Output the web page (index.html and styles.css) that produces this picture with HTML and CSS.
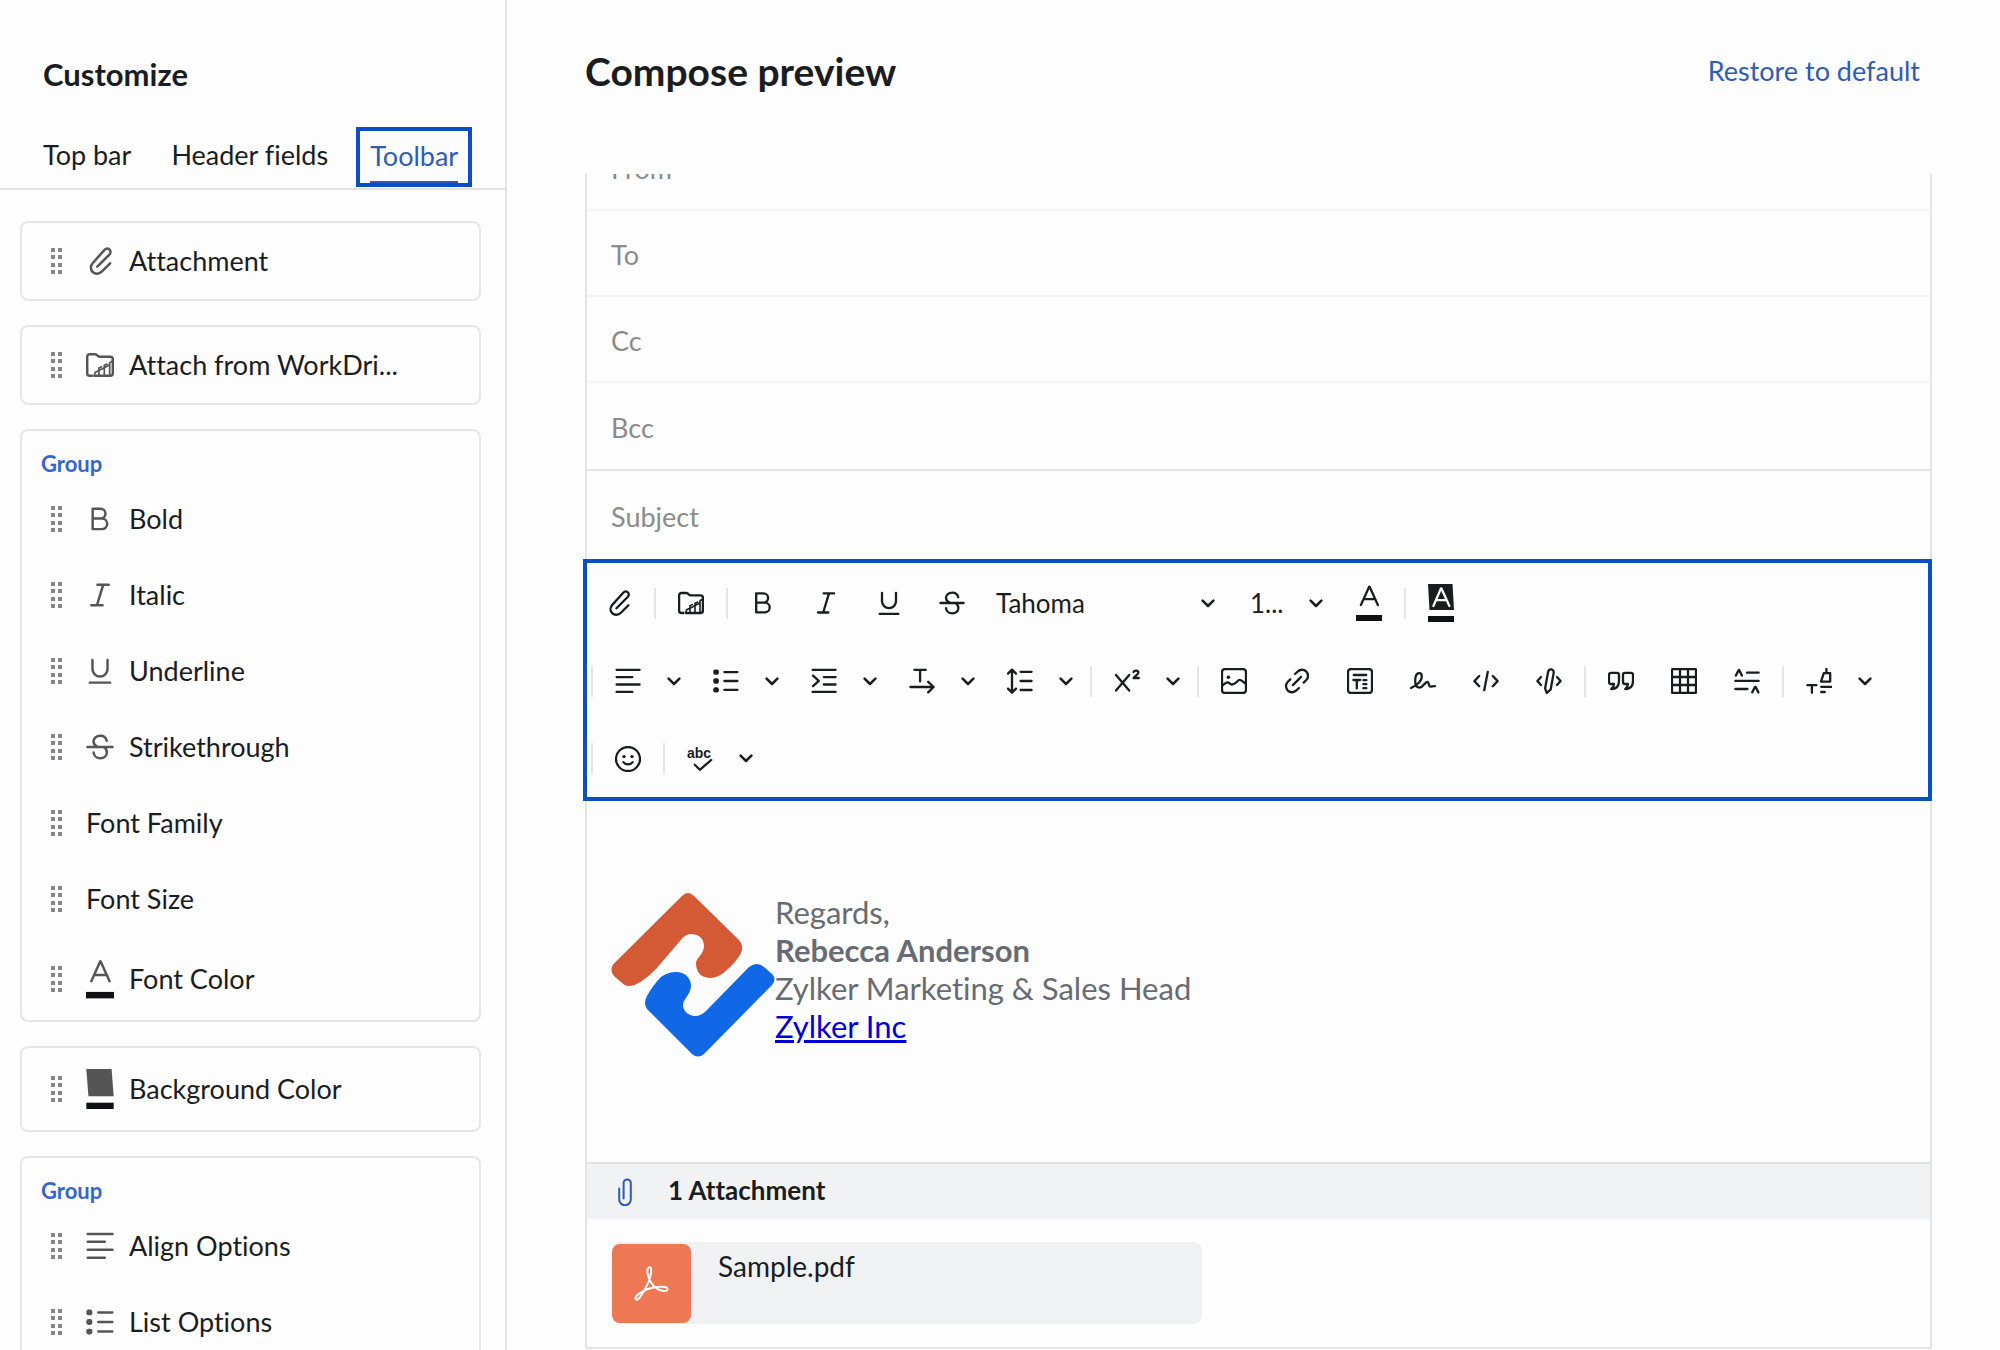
FILE: index.html
```html
<!DOCTYPE html>
<html lang="en">
<head>
<meta charset="utf-8">
<title>Compose preview</title>
<link rel="stylesheet" href="styles.css">
</head>
<body>
<svg class="sprite" aria-hidden="true">
  <symbol id="i-clip" viewBox="0 0 26 26"><path d="M22.4 15.2 14.9 22.7c-2.6 2.6-6.4 2.7-8.7.5s-2.2-5.9.3-8.6L17.2 2.7c1.3-1.4 3.3-1.5 4.6-.4s1.3 3.1.1 4.5L10.5 18.3"/></symbol>
  <symbol id="i-folder" viewBox="0 0 26 26"><path d="M5.5 23H3.4C2 23 1.1 22 1.1 20.6V5.500C1.1 4 2 3 3.4 3h5c1 0 1.600.4 2.200 1.200S12 5.400 13 5.400h9.400c1.500 0 2.500 1 2.500 2.400v12.800c0 1.400-1 2.400-2.400 2.400H8"/><path class="thin" d="M7.600 23l1-3.200 3.400-1.600V23M12 18.200v-2.400l2.400-1.200M12 18.200l5-2.600V23M17 15.600v-2.400l2.400-1M17 15.600l5-2.800V23M22 12.800v-2l2.600-1.600"/></symbol>
  <symbol id="i-bold" viewBox="0 0 26 26"><path d="M6.2 3.400h7.300a4.600 4.600 0 0 1 0 9.200H6.200zM6.200 12.600h8.600a4.900 4.900 0 0 1 0 9.800H6.200z"/></symbol>
  <symbol id="i-italic" viewBox="0 0 26 26"><path d="M10.7 3.4h10.4M5 22.5h10.4M16 3.4l-5.8 19.1"/></symbol>
  <symbol id="i-under" viewBox="0 0 26 26"><path d="M6 2.8v8.400a7 7 0 0 0 14 0V2.800M3.600 23.800h18.800"/></symbol>
  <symbol id="i-strike" viewBox="0 0 26 26"><path d="M1.4 13h23.2M19.2 7.2c-.6-2.8-2.9-4.6-5.8-4.6C9.6 2.6 7 5 7 7.8c0 2.2 1.4 3.8 3.6 4.8M7 18.2c.4 3 2.9 5.2 6.2 5.2 3.6 0 6.2-2.3 6.2-5.3 0-2.1-1-3.9-2.8-4.9"/></symbol>
  <symbol id="i-color" viewBox="0 0 26 36"><path d="M4.9 20 13.3 1.6h.2L21.9 20M7.600 14.200h11.600"/><path class="bar" d="M0 30h26v6H0z"/></symbol>
  <symbol id="i-bgfill" viewBox="0 0 26 38"><path class="solid" d="M0 0h24l2 26H2z"/><path class="bar" d="M0 32h26v6H0z"/></symbol>
  <symbol id="i-bg" viewBox="0 0 26 38"><path class="solid" d="M0 0h24.5l1.5 26H1.5z"/><path class="inv" d="M5.4 22 13 4.4h.4L21.400 22M8.200 16.200h10.600"/><path class="bar" d="M0 32h26v6H0z"/></symbol>
  <symbol id="i-align" viewBox="0 0 26 26"><path d="M1.6 1.8h23M1.6 9.1h15.8M1.6 16.5h23M1.6 23.9h15.8"/></symbol>
  <symbol id="i-list" viewBox="0 0 26 26"><path d="M11.4 4.1h13M11.4 13h13M11.4 21.9h13"/><rect class="solid" x=".3" y="1.4" width="5.6" height="5.4" rx="2"/><rect class="solid" x=".3" y="10.3" width="5.6" height="5.4" rx="2"/><rect class="solid" x=".3" y="19.2" width="5.6" height="5.4" rx="2"/></symbol>
  <symbol id="i-indent" viewBox="0 0 26 26"><path d="M1.6 1.8h23M12.8 9.1h11.8M12.8 16.5h11.8M1.6 23.9h23M2 7.6l5.8 5.2L2 18.2"/></symbol>
  <symbol id="i-dir" viewBox="0 0 26 26"><path d="M5.4 1.8h11.4M11.1 1.8v11.6M1.4 19h23M19.2 13.8l5.4 5.2-5.4 5.4"/></symbol>
  <symbol id="i-lineh" viewBox="0 0 26 26"><path d="M5 1.6v23M1 5.6l4-4 4 4M1 20.6l4 4 4-4M13.6 3.8h11M13.6 13h11M13.6 22h11"/></symbol>
  <symbol id="i-super" viewBox="0 0 26 26"><path d="M2 7l13.2 15.6M15.2 7 2 22.6"/><path d="M19.6 4c.5-2 4.8-2 4.8.6 0 2-3.6 3-4.8 5.4h5.2"/></symbol>
  <symbol id="i-image" viewBox="0 0 26 26"><rect x="1" y="1" width="24" height="24" rx="3"/><path d="M1.6 17.2c2-1.4 3.4-3 5-2.9 1.7.1 2.4 2.2 4.3 2.2 1.7 0 2.6-.6 4-1.8 1.5-1.2 2.2-2.9 3.9-2.9 1.6 0 3.8 2.4 5.8 3.8"/><circle class="solid" cx="7.4" cy="9.2" r="1.8"/></symbol>
  <symbol id="i-link" viewBox="0 0 26 26"><path d="M11 6l2.600-2.400a6 6 0 0 1 8.700 8.400l-2.600 2.600M15 20l-2.600 2.400a6 6 0 0 1-8.700-8.400l2.600-2.600M8.900 17.100l8.200-8.200"/></symbol>
  <symbol id="i-tbox" viewBox="0 0 26 26"><rect x="1" y="1" width="24" height="24" rx="3"/><path d="M6.8 7h12.4M6.4 12h6.8M9.8 12v8.4M16.4 12.2h3M16.4 16.2h3M16.4 20.2h3"/></symbol>
  <symbol id="i-sign" viewBox="0 0 26 26"><path d="M1 20c4.400-2.200 10.800-6 10.800-11.600 0-2-1-3.200-2.600-3.200-2.800 0-4 4-4 7.800 0 4.200 1.600 6.600 4.400 6.600 3.600 0 5-5.600 7.800-5.600 2 0 1 4.600 3.200 4.600 1.600 0 2.400-.8 4.200-.4"/></symbol>
  <symbol id="i-code" viewBox="0 0 26 26"><path d="M6.2 8l-4.8 5.1 4.8 5.1M14.8 3.8l-3.6 18.4M19.8 8l4.8 5.1-4.8 5.1"/></symbol>
  <symbol id="i-pencode" viewBox="0 0 26 26"><path d="M5 9l-3.6 4L5 17M21 9l3.6 4-3.6 4M10.8 25l-1.700-4.600 2.900-16c.4-2.200 1.800-3.300 3.500-3 1.700.3 2.500 1.800 2.100 4L14.700 21.400z"/></symbol>
  <symbol id="i-quote" viewBox="0 0 26 26"><path d="M3 4.800h6c1.300 0 2 .8 2 2v6.200c0 5-2.800 8-7.800 8.200 2-1.600 2.800-3 2.800-5.200H3c-1.300 0-2-.8-2-2V6.800c0-1.200.7-2 2-2z"/><path d="M17 4.800h6c1.300 0 2 .8 2 2v6.200c0 5-2.800 8-7.800 8.200 2-1.600 2.800-3 2.800-5.200h-3c-1.300 0-2-.8-2-2V6.800c0-1.200.7-2 2-2z"/></symbol>
  <symbol id="i-table" viewBox="0 0 26 26"><rect x="1" y="1" width="24" height="24" rx="1"/><path d="M9 1v24M17 1v24M1 9h24M1 17h24"/></symbol>
  <symbol id="i-space" viewBox="0 0 26 26"><path d="M1.800 7.600l2.900-5.600h.4L8 7.600M13 4.700h11.600M1.400 12.900h23.200M1.400 21h12M18.200 24.400l2.900-5.600h.4l2.900 5.600"/></symbol>
  <symbol id="i-format" viewBox="0 0 26 26"><path d="M1.400 17.200h9M5.900 17.200v7.600M20.400 1v4M17.800 5.200h6.400v8.400h-9.200zM15.200 18.800h10M15.200 24h3.600"/></symbol>
  <symbol id="i-smile" viewBox="0 0 26 26"><circle cx="13" cy="13" r="12"/><circle class="solid" cx="9" cy="10.600" r="1.700"/><circle class="solid" cx="17" cy="10.600" r="1.700"/><path d="M8.400 16.200c2.600 3 6.600 3 9.200 0"/></symbol>
  <symbol id="i-spell" viewBox="0 0 26 26"><text class="abc" x="0" y="12">abc</text><path d="M7.800 18.800l5 5L24.200 14"/></symbol>
  <symbol id="i-chev" viewBox="0 0 14 9"><path d="M1.600 1.600L7 7l5.400-5.400"/></symbol>
  <symbol id="i-grip" viewBox="0 0 12 26"><path class="solid" d="M0 0h4v4H0zM7 0h4v4H7zM0 7h4v4H0zM7 7h4v4H7zM0 15h4v4H0zM7 15h4v4H7zM0 22h4v4H0zM7 22h4v4H7z"/></symbol>
</svg>

<div class="app">
  <aside class="sidebar">
    <h2 class="sidebar-title">Customize</h2>
    <nav class="tabs">
      <button class="tab" type="button">Top bar</button>
      <button class="tab" type="button">Header fields</button>
      <button class="tab tab-active" type="button"><span class="tab-text">Toolbar</span></button>
    </nav>
    <div class="cards">
      <div class="card">
        <div class="item"><svg class="grip"><use href="#i-grip"/></svg><svg class="icon"><use href="#i-clip"/></svg><span class="name">Attachment</span></div>
      </div>
      <div class="card">
        <div class="item"><svg class="grip"><use href="#i-grip"/></svg><svg class="icon"><use href="#i-folder"/></svg><span class="name">Attach from WorkDri...</span></div>
      </div>
      <section class="card">
        <h3 class="group">Group</h3>
        <div class="item"><svg class="grip"><use href="#i-grip"/></svg><svg class="icon"><use href="#i-bold"/></svg><span class="name">Bold</span></div>
        <div class="item"><svg class="grip"><use href="#i-grip"/></svg><svg class="icon"><use href="#i-italic"/></svg><span class="name">Italic</span></div>
        <div class="item"><svg class="grip"><use href="#i-grip"/></svg><svg class="icon"><use href="#i-under"/></svg><span class="name">Underline</span></div>
        <div class="item"><svg class="grip"><use href="#i-grip"/></svg><svg class="icon"><use href="#i-strike"/></svg><span class="name">Strikethrough</span></div>
        <div class="item"><svg class="grip"><use href="#i-grip"/></svg><span class="name">Font Family</span></div>
        <div class="item"><svg class="grip"><use href="#i-grip"/></svg><span class="name">Font Size</span></div>
        <div class="item item-tall"><svg class="grip"><use href="#i-grip"/></svg><svg class="icon icon-tall"><use href="#i-color"/></svg><span class="name">Font Color</span></div>
      </section>
      <div class="card">
        <div class="item item-tall"><svg class="grip"><use href="#i-grip"/></svg><svg class="icon icon-tall"><use href="#i-bgfill"/></svg><span class="name">Background Color</span></div>
      </div>
      <section class="card">
        <h3 class="group">Group</h3>
        <div class="item"><svg class="grip"><use href="#i-grip"/></svg><svg class="icon"><use href="#i-align"/></svg><span class="name">Align Options</span></div>
        <div class="item"><svg class="grip"><use href="#i-grip"/></svg><svg class="icon"><use href="#i-list"/></svg><span class="name">List Options</span></div>
      </section>
    </div>
  </aside>

  <main class="main">
    <header class="head">
      <h1 class="title">Compose preview</h1>
      <a class="restore" href="#">Restore to default</a>
    </header>
    <div class="scroller">
      <div class="compose">
        <input class="field field-first" type="text" placeholder="From" aria-label="From">
        <input class="field" type="text" placeholder="To" aria-label="To">
        <input class="field" type="text" placeholder="Cc" aria-label="Cc">
        <input class="field field-last" type="text" placeholder="Bcc" aria-label="Bcc">
        <input class="field field-subject" type="text" placeholder="Subject" aria-label="Subject">

        <div class="toolbar" role="toolbar" aria-label="Formatting">
          <div class="row">
            <button class="tool" type="button" aria-label="Attachment"><svg><use href="#i-clip"/></svg></button>
            <span class="sep"></span>
            <button class="tool" type="button" aria-label="Attach from WorkDrive"><svg><use href="#i-folder"/></svg></button>
            <span class="sep"></span>
            <button class="tool" type="button" aria-label="Bold"><svg><use href="#i-bold"/></svg></button>
            <button class="tool" type="button" aria-label="Italic"><svg><use href="#i-italic"/></svg></button>
            <button class="tool" type="button" aria-label="Underline"><svg><use href="#i-under"/></svg></button>
            <button class="tool" type="button" aria-label="Strikethrough"><svg><use href="#i-strike"/></svg></button>
            <span class="picker picker-font"><select aria-label="Font family"><option>Tahoma</option></select><svg class="chev"><use href="#i-chev"/></svg></span>
            <span class="picker picker-size"><select aria-label="Font size"><option>1...</option></select><svg class="chev"><use href="#i-chev"/></svg></span>
            <button class="tool tool-tall" type="button" aria-label="Font color"><svg><use href="#i-color"/></svg></button>
            <span class="sep"></span>
            <button class="tool tool-tall" type="button" aria-label="Background color"><svg><use href="#i-bg"/></svg></button>
          </div>
          <div class="row">
            <span class="sep"></span>
            <button class="tool tool-drop" type="button" aria-label="Align"><svg><use href="#i-align"/></svg><svg class="chev"><use href="#i-chev"/></svg></button>
            <button class="tool tool-drop" type="button" aria-label="List"><svg><use href="#i-list"/></svg><svg class="chev"><use href="#i-chev"/></svg></button>
            <button class="tool tool-drop" type="button" aria-label="Indent"><svg><use href="#i-indent"/></svg><svg class="chev"><use href="#i-chev"/></svg></button>
            <button class="tool tool-drop" type="button" aria-label="Text direction"><svg><use href="#i-dir"/></svg><svg class="chev"><use href="#i-chev"/></svg></button>
            <button class="tool tool-drop" type="button" aria-label="Line height"><svg><use href="#i-lineh"/></svg><svg class="chev"><use href="#i-chev"/></svg></button>
            <span class="sep"></span>
            <button class="tool tool-drop" type="button" aria-label="Superscript"><svg><use href="#i-super"/></svg><svg class="chev"><use href="#i-chev"/></svg></button>
            <span class="sep"></span>
            <button class="tool" type="button" aria-label="Image"><svg><use href="#i-image"/></svg></button>
            <button class="tool" type="button" aria-label="Link"><svg><use href="#i-link"/></svg></button>
            <button class="tool" type="button" aria-label="Template"><svg><use href="#i-tbox"/></svg></button>
            <button class="tool" type="button" aria-label="Signature"><svg><use href="#i-sign"/></svg></button>
            <button class="tool" type="button" aria-label="HTML"><svg><use href="#i-code"/></svg></button>
            <button class="tool" type="button" aria-label="Edit HTML"><svg><use href="#i-pencode"/></svg></button>
            <span class="sep"></span>
            <button class="tool" type="button" aria-label="Quote"><svg><use href="#i-quote"/></svg></button>
            <button class="tool" type="button" aria-label="Table"><svg><use href="#i-table"/></svg></button>
            <button class="tool" type="button" aria-label="Spacing"><svg><use href="#i-space"/></svg></button>
            <span class="sep"></span>
            <button class="tool tool-drop" type="button" aria-label="Format painter"><svg><use href="#i-format"/></svg><svg class="chev"><use href="#i-chev"/></svg></button>
          </div>
          <div class="row">
            <span class="sep"></span>
            <button class="tool" type="button" aria-label="Emoji"><svg><use href="#i-smile"/></svg></button>
            <span class="sep"></span>
            <button class="tool tool-drop" type="button" aria-label="Spell check"><svg><use href="#i-spell"/></svg><svg class="chev"><use href="#i-chev"/></svg></button>
          </div>
        </div>

        <div class="body">
          <svg class="logo" viewBox="0 0 164 164" aria-hidden="true">
            <path fill="#d45a35" d="M71 3Q77-3 83 3L128 47Q134 54 129 62Q124 70 117 76Q108 85 99 85Q85 84 85 70C85 65 93 61 93 53C93 45 87 41 80 41Q74 41 69 48L45 76Q28 93 18 93Q14 93 10 89L3 83Q-2 77 2.500 71Z"/>
            <path fill="#1068e6" d="M138 74Q146 68 153 74L161 81Q166 86 161 92L93 161Q87 166 81 161L36 116Q32 110 36 103Q42 92 50 84Q57 79 65 79C75 79 80 86 80 93C80 101 72 106 72 112C72 119 79 123 84 123Q90 123 95 118Z"/>
          </svg>
          <p class="signature">Regards,<br><strong>Rebecca Anderson</strong><br>Zylker Marketing &amp; Sales Head<br><a href="#">Zylker Inc</a></p>
        </div>

        <div class="attach-bar">
          <svg class="attach-clip" viewBox="0 0 14 28" aria-hidden="true"><path d="M1.200 10.400v11a5.800 5.800 0 0 0 11.600 0V5a3.600 3.600 0 0 0-7.200 0v15.400"/></svg>
          <strong class="attach-count">1 Attachment</strong>
        </div>
        <div class="files">
          <div class="file">
            <span class="file-icon"><svg viewBox="0 0 35 35" aria-hidden="true"><path d="M15.500 1.200c2.200 0 2 4 .8 9.200-1.600 7-8.400 19-12 22.600-1.200 1.300-3.300.6-2.800-1.200 1.100-4 10-8.600 17.500-10.200 6-1.300 14-1.400 14.500 1.200.4 3-5.500 2.900-9.700.4-5-3-9.100-9.400-10.200-15.400-.6-3.300-.2-6.600 1.900-6.600z"/></svg></span>
            <span class="file-name">Sample.pdf</span>
          </div>
        </div>
      </div>
    </div>
  </main>
</div>
</body>
</html>
```
FILE: styles.css
```css
* { box-sizing: border-box; }

body {
  margin: 0;
  background: #fdfdfd;
  color: #1a1c1f;
  font: 27px/34px Lato, "Liberation Sans", sans-serif;
  font-variant-ligatures: none;
}

h1, h2, h3, p { margin: 0; }

button, input, select {
  margin: 0;
  padding: 0;
  border: 0;
  background: none;
  color: inherit;
  font: inherit;
}

svg {
  flex: none;
  fill: none;
  stroke: currentColor;
  stroke-width: 2.3px;
  stroke-linecap: round;
  stroke-linejoin: round;
}

.sprite { display: none; }
.solid { fill: currentColor; stroke: none; }
.bar { fill: #101214; stroke: none; }
.inv { stroke: #fff; }
.thin { stroke-width: 1.6px; }
.abc {
  fill: currentColor;
  stroke: none;
  font: bold 14px "Liberation Sans", sans-serif;
}

.app {
  display: flex;
  height: 100vh;
  overflow: hidden;
}

/* Sidebar */
.sidebar {
  flex: none;
  width: 507px;
  border-right: 2px solid #e4e5e8;
}

.sidebar-title {
  padding: 56px 43px 0;
  font-size: 31px;
  line-height: 36px;
}

.tabs {
  display: flex;
  height: 98px;
  padding: 35px 31px 0;
  border-bottom: 2px solid #e2e4e6;
}

.tab {
  height: 60px;
  margin-right: 16px;
  padding: 0 12px 4px;
  white-space: nowrap;
}

.tab-active {
  margin: 0;
  padding: 0 10px;
  border: 4px solid #0a50c4;
  color: #2f5bb7;
}

.tab-text {
  display: block;
  padding: 8px 0;
  border-bottom: 2px solid #2f5bb7;
}

.cards {
  display: grid;
  gap: 24px;
  padding: 31px 24px 0 20px;
}

.card {
  border: 2px solid #e6e6e8;
  border-radius: 8px;
}

.group {
  padding: 19px 19px 3px;
  color: #3465cb;
  font-size: 22px;
  line-height: 28px;
}

.item {
  display: flex;
  align-items: center;
  height: 76px;
  padding-left: 29px;
}

.item-tall { height: 82px; }
.item + .item-tall { margin-top: 1px; }

.grip {
  width: 12px;
  height: 26px;
  margin-right: 23px;
  color: #85858a;
}

.icon {
  width: 28px;
  height: 28px;
  margin-right: 15px;
  color: #555;
}

.icon-tall { height: 40px; }

.name { white-space: nowrap; }

/* Preview */
.main {
  display: flex;
  flex: 1;
  flex-direction: column;
  min-width: 0;
}

.head {
  display: flex;
  align-items: center;
  justify-content: space-between;
  height: 174px;
  padding: 0 80px 33px 78px;
}

.title {
  font-size: 39px;
  line-height: 46px;
}

.restore {
  color: #2f5bb7;
  text-decoration: none;
}

.scroller {
  flex: 1;
  overflow: hidden;
  padding: 0 68px 0 76px;
}

.compose {
  margin: -49px 0 0 2px;
  border: solid #e2e4e6;
  border-width: 0 2px 2px;
}

.field {
  display: block;
  width: 100%;
  height: 86px;
  padding: 3px 24px 0;
  border-bottom: 2px solid #f3f4f5;
}

.field::placeholder { color: #8b8b8b; opacity: 1; }
.field-last { height: 88px; border-bottom-color: #e2e4e6; }
.field-subject { height: 88px; border-bottom: 0; }

.toolbar {
  margin: 0 -2px 0 -4px;
  padding-top: 1px;
  border: 4px solid #0a50c4;
}

.row {
  display: flex;
  align-items: center;
  height: 78px;
}

.row:last-child { height: 77px; }

.sep {
  width: 2px;
  height: 31px;
  margin: 0 3px 0 4px;
  background: #e4e5e8;
}

.tool {
  display: flex;
  align-items: center;
  justify-content: center;
  width: 63px;
  height: 48px;
}

.tool svg {
  width: 26px;
  height: 26px;
}

.tool-tall svg { height: 38px; }

.tool-drop {
  justify-content: flex-start;
  gap: 26px;
  width: 98px;
  padding-left: 19px;
}

.tool .chev, .chev {
  width: 14px;
  height: 9px;
  stroke-width: 2.5px;
}

.picker {
  display: grid;
  align-items: center;
  font-size: 26px;
}

.picker select, .picker .chev { grid-area: 1 / 1; }

.picker select {
  width: 100%;
  height: 48px;
  padding-left: 13px;
  appearance: none;
}

.picker .chev {
  justify-self: end;
  pointer-events: none;
}

.picker-font { width: 254px; }
.picker-font .chev { margin-right: 22px; }
.picker-size { width: 100px; }
.picker-size .chev { margin-right: 14px; }

.body {
  display: flex;
  height: 361px;
  padding: 92px 24px 0;
}

.logo {
  width: 164px;
  height: 164px;
  stroke: none;
}

.signature {
  color: #686b73;
  font-size: 31px;
  line-height: 38px;
}

.signature a { color: #0000d6; }

.attach-bar {
  display: flex;
  align-items: center;
  gap: 36px;
  height: 57px;
  padding-left: 31px;
  border-top: 2px solid #dfe0e2;
  background: #f1f2f4;
}

.attach-clip {
  width: 14px;
  height: 28px;
  color: #2f5bb7;
  stroke-width: 2px;
}

.attach-count {
  padding-bottom: 4px;
  font-size: 26px;
}

.files { padding: 23px 25px; }

.file {
  display: flex;
  width: 590px;
  max-width: 100%;
  height: 82px;
  border-radius: 8px;
  background: #f0f1f3;
}

.file-icon {
  display: grid;
  place-items: center;
  width: 79px;
  height: 79px;
  margin: 2px 27px 0 0;
  border-radius: 8px;
  background: #ee7754;
  color: #fff;
}

.file-icon svg {
  width: 35px;
  height: 35px;
  stroke-width: 2px;
}

.file-name {
  padding-top: 7px;
  font-size: 28px;
}
```
